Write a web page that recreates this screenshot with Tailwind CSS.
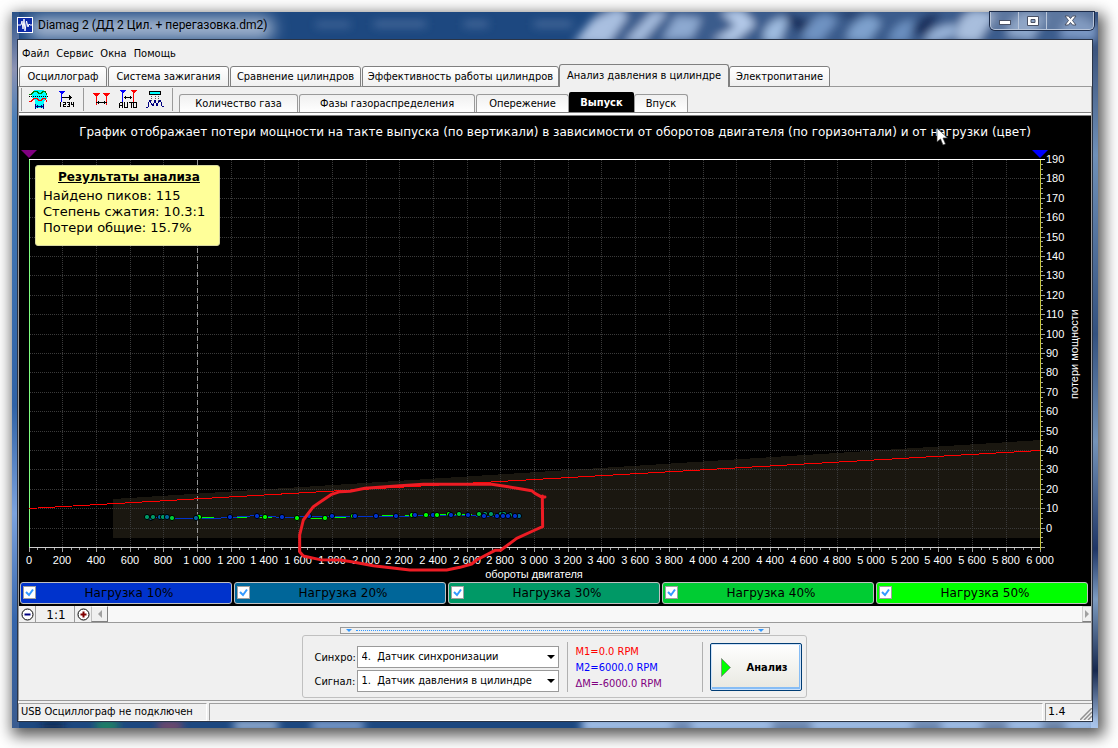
<!DOCTYPE html>
<html lang="ru">
<head>
<meta charset="utf-8">
<title>Diamag 2</title>
<script src="https://cdn.jsdelivr.net/npm/@tailwindcss/browser@4"></script>
</head>
<body class="min-h-screen flex bg-white pt-3 pl-3 pr-5 pb-5 text-[11px] leading-4 text-black font-['DejaVu_Sans_Condensed','DejaVu_Sans',sans-serif]">
<div class="relative flex-1 min-w-0 flex flex-col px-[5px] pb-[6px] bg-[#3f6ea6] shadow-[3px_5px_14px_3px_rgba(0,0,0,0.65)]">
  <svg class="absolute inset-0 w-full h-full" viewBox="0 0 1086 716" preserveAspectRatio="none" aria-hidden="true">
    <defs>
      <filter id="b3" x="-50%" y="-50%" width="200%" height="200%"><feGaussianBlur stdDeviation="4"/></filter>
      <filter id="b8" x="-50%" y="-100%" width="200%" height="300%"><feGaussianBlur stdDeviation="8"/></filter>
      <linearGradient id="side" x1="0" y1="0" x2="0" y2="1"><stop offset="0" stop-color="#2b5288"/><stop offset=".08" stop-color="#8c93b4"/><stop offset=".15" stop-color="#4a7fb8"/><stop offset=".55" stop-color="#2f62a6"/><stop offset=".7" stop-color="#7ba2de"/><stop offset=".85" stop-color="#3565ab"/><stop offset="1" stop-color="#3a5c90"/></linearGradient>
      <linearGradient id="sider" x1="0" y1="0" x2="0" y2="1"><stop offset="0" stop-color="#2b3f68"/><stop offset=".2" stop-color="#6f90b8"/><stop offset=".45" stop-color="#33517f"/><stop offset=".6" stop-color="#7493b8"/><stop offset=".75" stop-color="#1e3566"/><stop offset=".82" stop-color="#7d9cc0"/><stop offset=".92" stop-color="#16284e"/><stop offset="1" stop-color="#a9c4e8"/></linearGradient>
    </defs>
    <rect width="1086" height="716" fill="#1d4880"/>
    <rect width="7" height="716" fill="url(#side)"/>
    <rect x="1079" width="7" height="716" fill="url(#sider)"/>
    <g filter="url(#b8)"><rect x="16" y="5" width="246" height="22" rx="10" fill="#a9bad3"/></g>
    <g filter="url(#b3)">
      <path d="M590 -6H1086V34H560Z" fill="#3a5b8c"/>
      <path d="M562 30 L580 8 L606 -4 L616 4 L596 32Z" fill="#a9bfe0"/>
      <path d="M640 0 L612 30 L630 30 L656 0Z" fill="#a4bbdd"/>
      <path d="M664 4 L650 28 L680 26 L690 6Z" fill="#8da9d0"/>
      <path d="M708 0 L724 14 L700 28 L722 30 L744 12 L730 -2Z" fill="#b3c9e8"/>
      <path d="M752 20 Q760 4 776 6 L768 30 L752 30Z" fill="#9fbce0"/>
      <path d="M790 28 Q794 6 814 2 L826 8 L808 30Z" fill="#6f93c2"/>
      <path d="M834 28 Q838 8 858 4 L870 10 L856 30Z" fill="#7ea1cd"/>
      <path d="M876 30 Q882 8 902 8 L896 30Z" fill="#6b8fbf"/>
      <path d="M912 30 Q918 14 944 12 L942 24 L922 30Z" fill="#9ab5da"/>
      <path d="M944 28 Q944 2 964 -2 L984 2 L966 30Z" fill="#a8bedd"/>
      <path d="M994 24 Q1000 2 1016 0 L1034 4 L1020 28Z" fill="#8fa9ce"/>
      <path d="M1048 26 Q1050 6 1066 4 L1086 14 L1084 28Z" fill="#7a98c4"/>
      <path d="M772 0 L800 10 L786 22Z M854 -2 L836 6 L826 0Z M900 20 L912 4 L930 0 L912 24Z" fill="#142c58"/>
      <g fill="#4a6c9c"><rect x="304" y="10" width="34" height="5"/><rect x="362" y="9" width="52" height="6"/><rect x="452" y="9" width="24" height="6"/><rect x="522" y="9" width="38" height="6"/></g>
      <rect x="30" y="711" width="22" height="6" fill="#111d3c"/><rect x="84" y="710" width="22" height="7" fill="#22a255"/><rect x="146" y="711" width="24" height="6" fill="#b0495c"/><rect x="222" y="710" width="44" height="7" fill="#c4d8f4"/><rect x="300" y="710" width="52" height="7" fill="#a4c0ec"/><rect x="570" y="706" width="516" height="14" fill="#a9c5ec"/><rect x="660" y="711" width="20" height="6" fill="#33507f"/><rect x="760" y="711" width="40" height="6" fill="#24426f"/><rect x="900" y="711" width="30" height="6" fill="#2c4876"/><rect x="970" y="711" width="26" height="6" fill="#1d3560"/><rect x="1030" y="711" width="24" height="6" fill="#1b3056"/>
    </g>
  </svg>

  <header class="relative h-[27px] flex items-start">
    <svg class="mt-[5px] w-4 h-4 shrink-0" viewBox="0 0 16 16"><rect width="16" height="16" fill="#fff"/><rect x="1" y="1" width="14" height="14" fill="#0c2aa8"/><path d="M1 8H4L5 4L6 12L7 2L8 14L9.500 4L11 10L12 7L13 8H15" fill="none" stroke="#fff" stroke-width="1"/></svg>
    <h1 class="ml-[5px] mt-[5px] text-[12px] leading-4 text-black font-[Roboto,sans-serif]">Diamag 2 (ДД 2 Цил. + перегазовка.dm2)</h1>
    <div class="ml-auto mr-[-1px] h-[18px] flex border border-t-0 border-[#b9c6da] rounded-b-[5px] overflow-hidden shadow-[0_0_0_1px_#1c2c4a]">
      <button class="w-7 h-full grid place-items-center border-r border-[#b9c6da] bg-[#8fa0bc]/40" aria-label="Свернуть"><svg class="mt-1" width="12" height="5"><rect x=".5" y=".5" width="11" height="4" fill="#fff" stroke="#4a5266"/></svg></button>
      <button class="w-7 h-full grid place-items-center border-r border-[#b9c6da] bg-[#8fa0bc]/40" aria-label="Развернуть"><svg width="12" height="10"><path fill-rule="evenodd" d="M.5.5H11.500V9.500H.5ZM4 3.500V6.500H8V3.500Z" fill="#fff" stroke="#4a5266"/></svg></button>
      <button class="w-[46px] h-full grid place-items-center bg-[#8fa0bc]/40" aria-label="Закрыть"><svg width="13" height="11" viewBox="0 0 13 11"><path d="M1 1H4.500L6.500 3.500L8.500 1H12L8.500 5.500L12 10H8.500L6.500 7.500L4.500 10H1L4.500 5.500Z" fill="#fff" stroke="#4a5266"/></svg></button>
    </div>
  </header>

  <main class="relative flex-1 flex flex-col border border-[#2a3446] bg-[#f0f0f0]">
    <nav class="h-6 flex items-center gap-[7px] pl-1 pt-1">
      <button>Файл</button><button>Сервис</button><button>Окна</button><button>Помощь</button>
    </nav>

    <div class="h-[23px] -mb-px flex items-end pl-px relative" role="tablist">
      <button class="w-[88px] mr-px h-[21px] border border-[#808080] rounded-t-[3px] bg-linear-to-b from-white to-[#f0f0f0]">Осциллограф</button>
      <button class="w-[121px] mr-px h-[21px] border border-[#808080] rounded-t-[3px] bg-linear-to-b from-white to-[#f0f0f0]">Система зажигания</button>
      <button class="w-[131px] mr-px h-[21px] border border-[#808080] rounded-t-[3px] bg-linear-to-b from-white to-[#f0f0f0]">Сравнение цилиндров</button>
      <button class="w-[197px] h-[21px] whitespace-nowrap border border-[#808080] rounded-t-[3px] bg-linear-to-b from-white to-[#f0f0f0]">Эффективность работы цилиндров</button>
      <button class="w-[170px] h-[23px] whitespace-nowrap border border-b-0 border-[#808080] rounded-t-[3px] bg-[#f0f0f0]">Анализ давления в цилиндре</button>
      <button class="w-[101px] h-[21px] border border-[#808080] rounded-t-[3px] bg-linear-to-b from-white to-[#f0f0f0]">Электропитание</button>
    </div>

    <section class="flex-1 flex flex-col border border-[#9a9a9a]">
      <div class="h-[25px] flex items-end">
        <div class="self-center flex items-center h-[23px] ml-[2px] border-x border-[#9a9a9a] w-[152px]" role="toolbar">
          <svg class="w-[150px] h-[23px] shrink-0" viewBox="22 89 150 23" shape-rendering="crispEdges" fill="none">
            <path d="M83.500 89V112" stroke="#9a9a9a"/>
            <path d="M34 91H44V93L47 96V100L44 102V109H35V102L32 99V95L34 93Z" fill="#0ff"/>
            <path d="M29 95.500H31L34 92.500H37L39 94.500H41L43 92.500H45L47 95.500" stroke="#008000"/>
            <path d="M29 97.500H48" stroke="#000" stroke-dasharray="1 1"/>
            <path d="M29 102.500H31L34 99.500H37L39 101.500H41L43 99.500H45L47 102.500" stroke="#f00"/>
            <path d="M35.500 105V110M43.500 105V110M36 107.500H43M37.500 106V109M41.500 106V109" stroke="#000080"/>
            <path d="M58 92H65L62 95V103H61V95Z" fill="#00f"/>
            <path d="M62 98.500H72M69.500 96V101M70.500 97V100" stroke="#000"/>
            <path d="M60.500 103V108M63 103.500H65.500V105.500H63.500V107.500H66M67 103.500H69.500V107.500H67M68 105.500H70M71.500 103V105.500H74M73.500 103V108" stroke="#000"/>
            <path d="M92 94H100L97 98V106H96V98ZM102 94H110L107 98V106H106V98Z" fill="#f00"/>
            <path d="M96 103.500H107M98.500 102V105M104.500 102V105" stroke="#000"/>
            <path d="M119 91H126L123 94V103H122V94Z" fill="#00f"/>
            <path d="M130 91H137L134 94V103H133V94Z" fill="#f00"/>
            <path d="M124 98.500H132M125.500 97V100M130.500 97V100" stroke="#000"/>
            <path d="M119.500 109V105L120.500 103.500H122.500V109M120 106.500H122M124.500 103V108.500H127.500V103M129 103.500H133M131.500 103V109M133.500 103.500H136.500V108.500H133.500Z" stroke="#000"/>
            <rect x="149.500" y="92.500" width="11" height="3" fill="#0ff" stroke="#000"/>
            <path d="M151.500 97V103M155.500 97V103M158.500 97V103" stroke="#555" stroke-dasharray="1 1"/>
            <path d="M146 108H148L149 103L150 101L151 104L153 107L155 101L157 107L158 104L160 101L161 103L162 107H164" stroke="#000080"/>
          </svg>
        </div>
        <div class="flex items-end ml-[6px]" role="tablist">
          <button class="w-[119px] mr-px h-[18px] pt-px border border-b-0 border-[#9a9a9a] rounded-t-[3px] bg-linear-to-b from-[#f0f0f0] to-white">Количество газа</button>
          <button class="w-[176px] mr-px h-[18px] pt-px border border-b-0 border-[#9a9a9a] rounded-t-[3px] bg-linear-to-b from-[#f0f0f0] to-white">Фазы газораспределения</button>
          <button class="w-[93px] h-[18px] pt-px border border-b-0 border-[#9a9a9a] rounded-t-[3px] bg-linear-to-b from-[#f0f0f0] to-white">Опережение</button>
          <button class="w-[65px] h-5 pt-[2px] rounded-t-[2px] bg-black text-white font-bold">Выпуск</button>
          <button class="w-[54px] h-[18px] pt-px border border-b-0 border-[#9a9a9a] rounded-t-[3px] bg-linear-to-b from-[#f0f0f0] to-white">Впуск</button>
        </div>
      </div>
      <div class="h-1 border-y border-[#808080] bg-white"></div>

      <div class="relative bg-black pb-[2px]">
        <p class="h-8 leading-8 text-center text-[12px] text-white whitespace-nowrap font-['DejaVu_Sans',sans-serif]">График отображает потери мощности на такте выпуска (по вертикали) в зависимости от оборотов двигателя (по горизонтали) и от нагрузки (цвет)</p>
        <svg id="plot" class="block w-full h-auto font-['Liberation_Sans',sans-serif]" viewBox="19 148 1072 434" font-size="11" fill="none">
          <path d="M113 499L1041 440V538H113Z" fill="#1a1710" shape-rendering="crispEdges"/>
          <g id="grid" stroke="#3a3a3a" stroke-dasharray="1 1" shape-rendering="crispEdges"></g>
          <g id="ticks" stroke="#a0a0a0" shape-rendering="crispEdges"></g>
          <g shape-rendering="crispEdges">
            <path d="M197.500 160V547" stroke="#949494" stroke-dasharray="5 3"/>
            <path d="M29 547.500H1041" stroke="#d0d0d0"/>
            <path d="M29.500 159V547" stroke="#80ff80"/>
            <path d="M1040.500 159V550" stroke="#c8c83c"/>
            <path d="M29 159.500H1045" stroke="#fff"/>
            <path d="M29 508.500L1040 450.500" stroke="#f00"/>
          </g>
          <path d="M21 150H37L29 158Z" fill="#800080"/>
          <path d="M1032 150H1048L1040 158Z" fill="#00f"/>
          <g shape-rendering="crispEdges">
            <path d="M172 518.500H196L199 517.500H230M230 517.500H290L325 518.500L353 516.500L412 515.500L449 514.500H510" stroke="#0f0" stroke-dasharray="17 8"/>
            <path d="M147 517.500L172 518.500H212L230 517.500L257 515.500L282 517.500L309 516.500H396L433 515.500H468L484 516.500H519" stroke="#03c"/>
          </g>
          <g id="dots" stroke="#000" stroke-width="1"></g>
          <g id="labels" fill="#fff"></g>
          <text x="534" y="578" text-anchor="middle" fill="#fff">обороты двигателя</text>
          <text transform="translate(1078 354) rotate(-90)" text-anchor="middle" fill="#fff">потери мощности</text>
          <g transform="translate(290 460) scale(.3333)">
            <path d="M765 111L757 112L735 100L725 92L690 86L640 78L605 73H400L330 77L225 85L180 94L150 95L125 103L85 130L70 140L40 180L29 225V275L40 288L90 299L150 300L185 305L250 317L360 330H470L510 322L545 312L560 300L615 271H632L680 235L735 210L758 200L757 108" stroke="#ed1c24" stroke-width="9" stroke-linejoin="round" stroke-linecap="round"/>
          </g>
        </svg>

        <aside class="absolute left-4 top-[49px] w-[185px] h-[81px] pl-[7px] pt-[3px] rounded-[3px] border border-[#d8d8a0] bg-[#ffff99] text-[13px] leading-4 whitespace-nowrap font-['DejaVu_Sans',sans-serif]">
          <h2 class="mb-[3px] pr-1 font-bold underline text-center text-[12px]">Результаты анализа</h2>
          <p>Найдено пиков: 115</p>
          <p>Степень сжатия: 10.3:1</p>
          <p>Потери общие: 15.7%</p>
        </aside>
        <svg class="absolute left-[917px] top-[11px]" width="12" height="20" viewBox="0 0 12 20"><path d="M1 1V15L4.500 12L7 18L9.500 17L7 11H11.500Z" fill="#fff" stroke="#333" stroke-width=".7"/></svg>

        <div class="grid grid-cols-5 gap-[2px] pl-px pr-[3px] text-[12px] font-['DejaVu_Sans',sans-serif]">
          <label class="relative h-[22px] flex items-center justify-center pl-[6px] rounded-[3px] border border-[#c0c0c0] bg-[#0033cc]"><input type="checkbox" checked class="absolute left-[2px] top-[3px] w-[13px] h-[13px] appearance-none bg-white border border-[#a0a0a0]"><svg class="absolute left-[2px] top-[3px]" width="13" height="13"><path d="M3 6L6 9L10 3.500" fill="none" stroke="#3399ff" stroke-width="2"/></svg>Нагрузка 10%</label>
          <label class="relative h-[22px] flex items-center justify-center pl-[6px] rounded-[3px] border border-[#c0c0c0] bg-[#006699]"><input type="checkbox" checked class="absolute left-[2px] top-[3px] w-[13px] h-[13px] appearance-none bg-white border border-[#a0a0a0]"><svg class="absolute left-[2px] top-[3px]" width="13" height="13"><path d="M3 6L6 9L10 3.500" fill="none" stroke="#3399ff" stroke-width="2"/></svg>Нагрузка 20%</label>
          <label class="relative h-[22px] flex items-center justify-center pl-[6px] rounded-[3px] border border-[#c0c0c0] bg-[#009966]"><input type="checkbox" checked class="absolute left-[2px] top-[3px] w-[13px] h-[13px] appearance-none bg-white border border-[#a0a0a0]"><svg class="absolute left-[2px] top-[3px]" width="13" height="13"><path d="M3 6L6 9L10 3.500" fill="none" stroke="#3399ff" stroke-width="2"/></svg>Нагрузка 30%</label>
          <label class="relative h-[22px] flex items-center justify-center pl-[6px] rounded-[3px] border border-[#c0c0c0] bg-[#00cc33]"><input type="checkbox" checked class="absolute left-[2px] top-[3px] w-[13px] h-[13px] appearance-none bg-white border border-[#a0a0a0]"><svg class="absolute left-[2px] top-[3px]" width="13" height="13"><path d="M3 6L6 9L10 3.500" fill="none" stroke="#3399ff" stroke-width="2"/></svg>Нагрузка 40%</label>
          <label class="relative h-[22px] flex items-center justify-center pl-[6px] rounded-[3px] border border-[#c0c0c0] bg-[#00ff00]"><input type="checkbox" checked class="absolute left-[2px] top-[3px] w-[13px] h-[13px] appearance-none bg-white border border-[#a0a0a0]"><svg class="absolute left-[2px] top-[3px]" width="13" height="13"><path d="M3 6L6 9L10 3.500" fill="none" stroke="#3399ff" stroke-width="2"/></svg>Нагрузка 50%</label>
        </div>
      </div>

      <div class="h-[17px] flex border-b border-[#9a9a9a]">
        <button class="w-[17px] grid place-items-center border-r border-[#9a9a9a]" aria-label="Уменьшить"><svg width="13" height="13"><circle cx="6.500" cy="6.500" r="5.500" fill="#fff" stroke="#000"/><path d="M3.500 6.500H9.500" stroke="#000080" stroke-width="2"/></svg></button>
        <button class="w-[39px] pt-[2px] pl-[2px] leading-[14px] text-[12px] border-r border-[#9a9a9a] font-['DejaVu_Sans',sans-serif]">1:1</button>
        <button class="w-4 grid place-items-center" aria-label="Увеличить"><svg width="13" height="13"><circle cx="6.500" cy="6.500" r="5.500" fill="#fff" stroke="#000"/><path d="M3.500 6.500H9.500M6.500 3.500V9.500" stroke="#800000" stroke-width="2"/></svg></button>
        <button class="w-[17px] grid place-items-center border border-l-[#c0c0c0] border-t-white border-r-[#808080] border-b-[#808080]" aria-label="Влево"><svg width="6" height="8"><path d="M5 0V8L1 4Z" fill="#a0a0a0"/></svg></button>
        <div class="flex-1 bg-[#f8f8f8]"></div>
        <button class="w-[9px] grid place-items-center border border-r-0 border-l-[#d0d0d0] border-t-[#d0d0d0] border-b-[#808080]" aria-label="Вправо"><svg width="6" height="8"><path d="M1 0V8L5 4Z" fill="#a0a0a0"/></svg></button>
      </div>

      <div class="flex-1 flex flex-col items-center pt-1">
        <div class="w-[430px] h-[7px] flex items-center px-[5px] gap-1 border border-[#9a9a9a] text-[#3399ff]">
          <svg width="6" height="3"><path d="M0 0H6L3 3Z" fill="currentColor"/></svg>
          <div class="flex-1 border-t border-dotted border-[#3399ff]"></div>
          <svg width="6" height="3"><path d="M0 0H6L3 3Z" fill="currentColor"/></svg>
        </div>
        <div class="mt-px mr-[2px] w-[505px] h-[63px] flex items-center border border-[#c0c0c0] rounded-[3px]">
          <div class="ml-3 pt-1 w-[246px] grid grid-cols-[42px_1fr] gap-y-[2px] items-center">
            <label class="pt-[2px]" for="sync">Синхро:</label>
            <div class="relative"><select id="sync" class="block w-[202px] h-[22px] pl-1 appearance-none bg-white border border-[#9a9a9a]"><option>4.&nbsp; Датчик синхронизации</option></select><svg class="absolute right-[6px] top-[9px] pointer-events-none" width="8" height="4"><path d="M0 0H8L4 4Z"/></svg></div>
            <label class="pt-[2px]" for="sig">Сигнал:</label>
            <div class="relative"><select id="sig" class="block w-[202px] h-[22px] pl-1 appearance-none bg-white border border-[#9a9a9a]"><option>1.&nbsp; Датчик давления в цилиндре</option></select><svg class="absolute right-[6px] top-[9px] pointer-events-none" width="8" height="4"><path d="M0 0H8L4 4Z"/></svg></div>
          </div>
          <div class="ml-[6px] w-[136px] h-[50px] pt-[2px] pl-2 border-x border-[#b0b0b0] leading-4">
            <p class="text-[#f00]">M1=0.0 RPM</p>
            <p class="text-[#00f]">M2=6000.0 RPM</p>
            <p class="text-[#800080]">ΔM=-6000.0 RPM</p>
          </div>
          <button class="ml-[7px] w-[92px] h-[48px] flex items-center pl-[10px] pt-[2px] gap-4 font-bold border border-[#003c74] rounded-[2px] bg-linear-to-b from-white to-[#e8e8e0] shadow-[inset_0_0_0_1px_#cfe3fa,inset_-1px_-2px_0_1px_#86bdf5]"><svg width="10" height="19"><path d="M.5.5V18.500L9.500 9.500Z" fill="#0f0" stroke="#808080" stroke-width=".8"/></svg><span>Анализ</span></button>
        </div>
      </div>
    </section>

    <footer class="h-5 pt-[2px] flex gap-[2px]">
      <div class="w-[189px] pl-[2px] border border-[#a0a0a0] border-r-white border-b-white">USB Осциллограф не подключен</div>
      <div class="flex-1 border border-[#a0a0a0] border-r-white border-b-white"></div>
      <div class="w-[47px] pl-[2px] flex justify-between border border-r-0 border-[#a0a0a0] border-b-white font-['DejaVu_Sans',sans-serif]">1.4<svg class="self-end" width="12" height="12"><path d="M0 12L12 0M4 12L12 4M8 12L12 8" stroke="#909090" stroke-width="1.500"/></svg></div>
    </footer>
  </main>
</div>

<script>
  const NS = 'http://www.w3.org/2000/svg';
  function add(parent, tag, attrs, text) {
    const el = document.createElementNS(NS, tag);
    for (const k in attrs) el.setAttribute(k, attrs[k]);
    if (text) el.textContent = text;
    document.getElementById(parent).appendChild(el);
  }
  // Horizontal axis: 0..6000 rpm, vertical axis: -10..190
  const px = rpm => Math.floor(29 + rpm * 1011 / 6000) + 0.5;
  const py = v => Math.round(547 - (v + 10) * 19.4 / 10) + 0.5;
  for (let r = 0; r <= 6000; r += 50) {
    const major = r % 200 === 0;
    add('ticks', 'path', { d: `M${px(r)} 548v${major ? 4 : 2}` });
    if (major) {
      if (r > 0 && r < 6000) add('grid', 'path', { d: `M${px(r)} 160V547` });
      const s = r >= 1000 ? Math.floor(r / 1000) + ' ' + String(r % 1000).padStart(3, '0') : String(r);
      add('labels', 'text', { x: Math.floor(px(r)), y: 564, 'text-anchor': 'middle' }, s);
    }
  }
  for (let i = 0; i < 80; i++) {
    const v = -10 + i * 2.5;
    add('ticks', 'path', { d: `M1041 ${py(v)}h${v % 10 === 0 ? 4 : 2}` });
  }
  for (let v = 0; v <= 190; v += 10) {
    if (v < 190) add('grid', 'path', { d: `M30 ${py(v)}H1040` });
    add('labels', 'text', { x: 1046, y: py(v) + 3.5 }, String(v));
  }
  const palette = { a: '#0033cc', b: '#006699', c: '#009966', d: '#00cc33', e: '#00ff00' };
  const dots = [[151,518,'b'],[147,517,'c'],[153,517,'c'],[160,517,'b'],[163,517,'c'],[167,517,'b'],[172,518,'d'],[199,517,'e'],[196,518,'b'],
    [230,517,'a'],[257,516,'a'],[265,517,'e'],[282,517,'a'],[297,518,'e'],[309,516,'a'],[325,518,'e'],[332,516,'a'],[353,516,'e'],[355,516,'a'],
    [376,516,'a'],[396,516,'a'],[412,515,'e'],[415,515,'a'],[426,515,'e'],[433,515,'a'],[437,515,'e'],[449,514,'e'],[451,515,'a'],[459,514,'d'],
    [468,515,'a'],[479,514,'d'],[485,514,'c'],[484,516,'a'],[491,514,'c'],[501,514,'c'],[497,516,'a'],[504,514,'c'],[503,516,'a'],[510,515,'c'],[508,516,'a'],[519,516,'b'],[515,516,'a']];
  for (const [x, y, c] of dots) add('dots', 'circle', { cx: x, cy: y, r: 2.6, fill: palette[c] });
</script>
</body>
</html>
